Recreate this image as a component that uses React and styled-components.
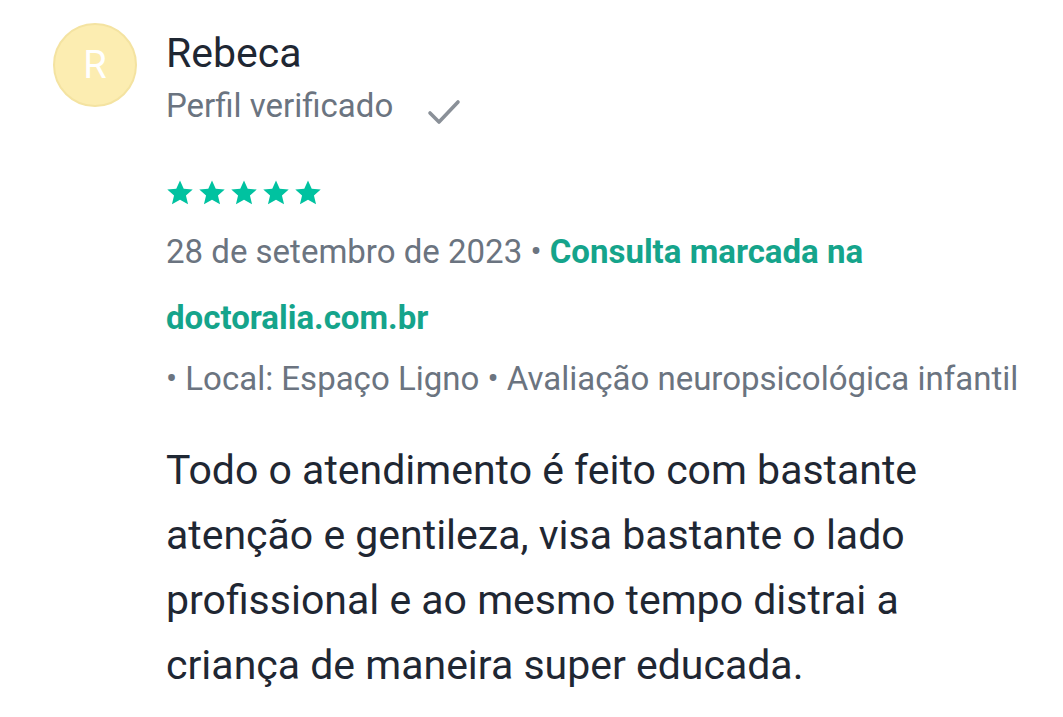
import React from "react";
import styled, { createGlobalStyle } from "styled-components";

const Global = createGlobalStyle`
  html, body { margin: 0; padding: 0; background: #ffffff; }
  body { font-family: Roboto, "Noto Sans", sans-serif; -webkit-font-smoothing: antialiased; }
`;

const Review = styled.article`
  display: flex;
  align-items: flex-start;
  gap: 29px;
  padding: 23px 0 0 53px;
  width: 1026px;
  box-sizing: border-box;
`;

const Avatar = styled.div`
  flex: none;
  width: 80px;
  height: 80px;
  border-radius: 50%;
  background: #fcedb1;
  border: 2px solid #f4e3a1;
  display: flex;
  align-items: center;
  justify-content: center;
  color: #ffffff;
  font-size: 38px;
  font-weight: 400;
`;

const Body = styled.div`
  flex: 1;
  min-width: 0;
  display: flex;
  flex-direction: column;
`;

const Name = styled.div`
  font-size: 41px;
  line-height: 48px;
  color: #1f2733;
  margin-top: 6px;
`;

const Verified = styled.div`
  display: flex;
  align-items: flex-start;
  gap: 34px;
  font-size: 33px;
  line-height: 40px;
  color: #6b7480;
  margin-top: 9px;

  svg {
    margin-top: 12px;
  }
`;

const Stars = styled.div`
  display: flex;
  gap: 4px;
  margin-top: 53px;
`;

const Meta = styled.div`
  font-size: 33px;
  line-height: 66px;
  color: #6b7480;
  margin-top: 12px;
`;

const Link = styled.span`
  color: #15a48b;
  font-weight: 700;
`;

const Local = styled.div`
  font-size: 33px;
  line-height: 40px;
  color: #6b7480;
  margin-top: 8px;
`;

const Text = styled.p`
  margin: 39px 0 0;
  font-size: 41px;
  line-height: 65px;
  color: #1f2733;
`;

const Star = () => (
  <svg width="28" height="28" viewBox="0 0 24 24">
    <path
      d="M12 1.2l3.2 7.1 7.7.7-5.8 5.1 1.8 7.6L12 17.7l-6.9 4 1.8-7.6L1.1 9l7.7-.7z"
      fill="#00c2a0"
    />
  </svg>
);

const Check = () => (
  <svg width="34" height="28" viewBox="0 0 34 28">
    <path d="M3 15l9 9L31 4" fill="none" stroke="#8a9098" strokeWidth="3.6" strokeLinecap="round" strokeLinejoin="round" />
  </svg>
);

export default function App() {
  return (
    <>
      <Global />
      <Review>
        <Avatar>R</Avatar>
        <Body>
          <Name>Rebeca</Name>
          <Verified>
            Perfil verificado
            <Check />
          </Verified>
          <Stars>
            {[0, 1, 2, 3, 4].map((i) => (
              <Star key={i} />
            ))}
          </Stars>
          <Meta>
            28 de setembro de 2023 • <Link>Consulta marcada na doctoralia.com.br</Link>
          </Meta>
          <Local>• Local: Espaço Ligno • Avaliação neuropsicológica infantil</Local>
          <Text>
            Todo o atendimento é feito com bastante atenção e gentileza, visa bastante o lado
            profissional e ao mesmo tempo distrai a criança de maneira super educada.
          </Text>
        </Body>
      </Review>
    </>
  );
}
